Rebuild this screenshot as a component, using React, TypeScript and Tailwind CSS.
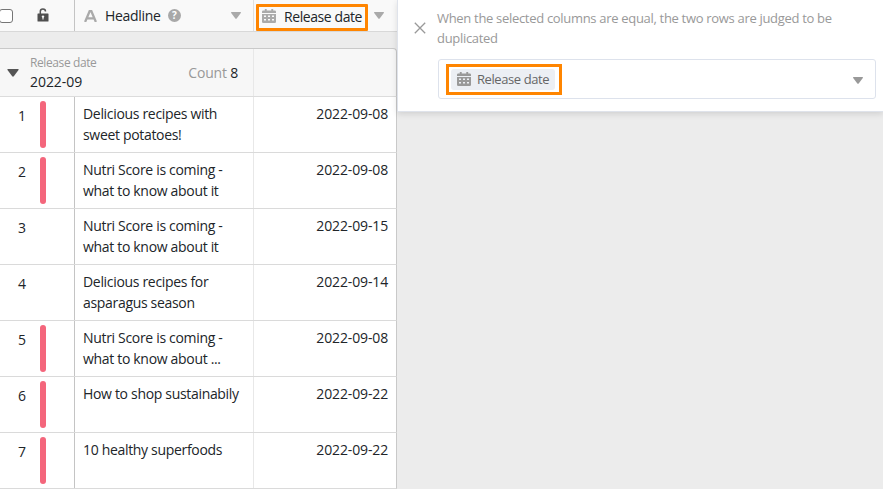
import React from "react";

type Row = { n: number; lines: string[]; date: string; marked: boolean };

const rows: Row[] = [
  { n: 1, lines: ["Delicious recipes with", "sweet potatoes!"], date: "2022-09-08", marked: true },
  { n: 2, lines: ["Nutri Score is coming -", "what to know about it"], date: "2022-09-08", marked: true },
  { n: 3, lines: ["Nutri Score is coming -", "what to know about it"], date: "2022-09-15", marked: false },
  { n: 4, lines: ["Delicious recipes for", "asparagus season"], date: "2022-09-14", marked: false },
  { n: 5, lines: ["Nutri Score is coming -", "what to know about ..."], date: "2022-09-08", marked: true },
  { n: 6, lines: ["How to shop sustainabily"], date: "2022-09-22", marked: true },
  { n: 7, lines: ["10 healthy superfoods"], date: "2022-09-22", marked: true },
];

function Caret({ className }: { className: string }) {
  return (
    <svg viewBox="0 0 10 7" className={`shrink-0 ${className}`} fill="currentColor">
      <path d="M.6 0h8.8q.9.1.4.9L5.7 6.4Q5 7.2 4.3 6.4L.2.9Q-.3.1.6 0z" />
    </svg>
  );
}

function Calendar() {
  return (
    <svg viewBox="0 0 14 14" className="h-3.5 w-3.5 shrink-0" fill="currentColor">
      <path
        fillRule="evenodd"
        d="M2.800 0h1.900v1.600h4.600V0h1.900v1.600h1.600q1.200 0 1.200 1.200V4H0V2.800Q0 1.600 1.200 1.600h1.600zM0 5h14v7.800q0 1.200-1.200 1.200H1.200Q0 14 0 12.800zM2 6.500v1.500h2V6.500zm4 0v1.500h2V6.500zm4 0v1.500h2V6.500zM2 10v1.500h2V10zm4 0v1.500h2V10zm4 0v1.500h2V10z"
      />
    </svg>
  );
}

function Unlock() {
  return (
    <svg viewBox="0 0 12 14" className="h-3.5 w-3" fill="none">
      <path d="M3.300 6V3.400Q3.300 1 5.900 1T8.500 3.500" stroke="#555" strokeWidth="1.500" />
      <path d="M1 5.500h10q.5 0 .5.500v7q0 .5-.5.500H1q-.5 0-.5-.5V6q0-.5.500-.5z" fill="#4f4f4f" />
      <path d="M6 9v2.500" stroke="#f7f7f7" strokeWidth="1.100" />
      <circle cx="6" cy="8.600" r="1.200" fill="#f7f7f7" />
    </svg>
  );
}

function Table() {
  return (
    <section className="flex w-[397px] shrink-0 flex-col bg-[#ececec]">
      <div className="flex h-8 border-b border-[#d8d8d8] bg-[#f9f9f9]">
        <div className="flex w-[75px] items-center border-r border-[#c4c4c4]">
          <div className="-ml-px h-3.5 w-3.5 rounded-[3px] border border-[#767676] bg-white" />
          <div className="mb-px ml-6"><Unlock /></div>
        </div>
        <div className="flex w-[179px] items-center border-r border-[#e0e0e0] pl-[9px] pr-3 text-[#aaa]">
          <svg viewBox="0 0 13 12" className="h-3 w-[13px]" fill="none" stroke="currentColor" strokeWidth="2.300">
            <path d="M1.100 12 5.700 1h1.600l4.600 11M3 8.300h7" />
          </svg>
          <span className="ml-2 w-[55px] text-[14px] tracking-[-0.32px] text-[#212529]">Headline</span>
          <span className="ml-2 flex h-[13px] w-[13px] items-center justify-center rounded-full bg-[#a8a8a8] text-[10px] font-bold text-white">?</span>
          <Caret className="ml-auto h-[7px] w-2.5" />
        </div>
        <div className="flex flex-1 items-start pl-[2px] pt-1 text-[#aaa]">
          <div className="flex h-[27px] w-[112px] items-center rounded-[1px] border-[3px] border-[#ff8500] pb-[3px] pl-[3px]">
            <Calendar />
            <span className="ml-2 whitespace-nowrap text-[14px] tracking-[-0.42px] text-[#212529]">Release date</span>
          </div>
          <Caret className="ml-[6px] mt-2 h-[7px] w-2.5" />
        </div>
      </div>
      <div className="mt-4 flex h-[49px] rounded-tr-[4px] border-b border-r border-t border-[#c9c9c9] border-b-[#dcdcdc] bg-[#f7f7f7]">
        <div className="flex w-[254px] items-center border-r border-[#e8e8e8] pl-[7px] pr-[15px]">
          <Caret className="h-[8px] w-[12px] text-[#555]" />
          <div className="ml-[11px] flex flex-col">
            <span className="text-[12px] leading-[18px] tracking-[-0.4px] text-[#999]">Release date</span>
            <span className="text-[14px] leading-[20px] tracking-[-0.05px] text-[#212529]">2022-09</span>
          </div>
          <span className="ml-auto text-[14px] tracking-[-0.2px] text-[#999]">Count <span className="text-[#212529]">8</span></span>
        </div>
      </div>
      {rows.map((row) => (
        <div key={row.n} className="flex h-14 border-b border-r border-b-[#dadada] border-r-[#c9c9c9] bg-white text-[14px] leading-[21px] text-[#212529]">
          <div className="flex w-[75px] border-r border-[#c4c4c4] pt-1">
            <span className="w-10 pl-[18px] pt-1">{row.n}</span>
            {row.marked && <span className="h-[47px] w-1.5 rounded-full bg-[#f4667c]" />}
          </div>
          <div className="w-[179px] whitespace-nowrap border-r border-[#e8e8e8] pl-2 pt-1.5 tracking-[-0.32px]">
            {row.lines.map((line) => (
              <div key={line}>{line}</div>
            ))}
          </div>
          <div className="flex-1 pr-2 pt-1.5 text-right tracking-[-0.14px]">{row.date}</div>
        </div>
      ))}
    </section>
  );
}

function DuplicatePanel() {
  return (
    <aside className="h-[112px] w-[486px] shrink-0 border-b border-l border-[#dfe3eb] bg-white pl-4 pr-[7px] pt-2 shadow-[0_2px_6px_rgba(0,0,0,0.12)]">
      <div className="flex">
        <svg viewBox="0 0 12 12" className="mt-[14px] h-3 w-3 shrink-0" stroke="#999" strokeWidth="1.300">
          <path d="m.8.8 10.400 10.400M11.200.8.8 11.200" />
        </svg>
        <p className="ml-[11px] whitespace-nowrap text-[13px] leading-5 tracking-[-0.31px] text-[#999]">
          When the selected columns are equal, the two rows are judged to be<br />duplicated
        </p>
      </div>
      <div className="ml-6 mt-[11px] flex h-10 items-center rounded-[3px] border border-[#dde2ec] pl-[7px] pr-3">
        <div className="flex h-[31px] w-[116px] items-center border-[3px] border-[#ff8500] pl-[2px]">
          <div className="flex h-[21px] w-[104px] items-center rounded-[3px] bg-[#eceff4] pl-[6px] text-[#999]">
            <Calendar />
            <span className="ml-[6px] mt-px whitespace-nowrap text-[13px] tracking-[-0.42px] text-[#666]">Release date</span>
          </div>
        </div>
        <Caret className="ml-auto mt-[2px] h-[7px] w-2.5 text-[#999]" />
      </div>
    </aside>
  );
}

export default function App() {
  return (
    <main className="flex h-[489px] w-[883px] items-start overflow-hidden bg-[#ececec] font-['Open_Sans','Noto_Sans',sans-serif]">
      <Table />
      <DuplicatePanel />
    </main>
  );
}
